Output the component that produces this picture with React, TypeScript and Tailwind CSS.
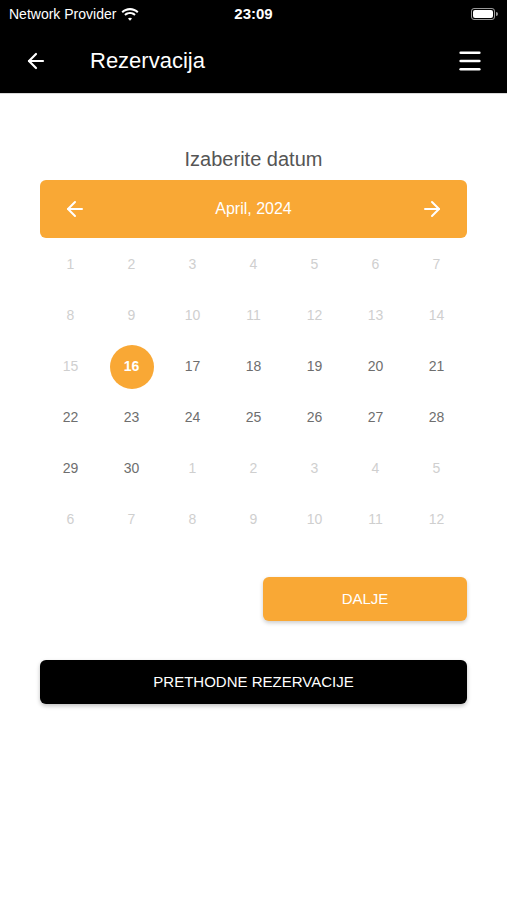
import { ArrowLeft, ArrowRight, Menu } from 'lucide-react';

const font = { fontFamily: '"Liberation Sans", Arial, sans-serif' };

type Day = { n: number; active: boolean };

function buildDays(): Day[] {
  const days: Day[] = [];
  for (let i = 1; i <= 30; i++) days.push({ n: i, active: i >= 16 });
  for (let i = 1; i <= 12; i++) days.push({ n: i, active: false });
  return days;
}

function StatusBar() {
  return (
    <div className="relative flex h-[28px] items-center justify-between px-[9px] text-[14px] text-white">
      <div className="flex items-center gap-[5px]">
        <span>Network Provider</span>
        <svg width="18" height="13" viewBox="0 0 18 13" fill="white">
          <path d="M9 2.2c2.7 0 5.2 1 7.1 2.8l1.4-1.5C15.2 1.3 12.2 0 9 0S2.8 1.3.5 3.5l1.4 1.5C3.8 3.2 6.3 2.2 9 2.2z" />
          <path d="M9 6.1c1.6 0 3.1.6 4.3 1.7l1.4-1.5C13.2 4.9 11.2 4 9 4S4.8 4.9 3.3 6.3l1.4 1.5C5.9 6.7 7.4 6.1 9 6.1z" />
          <path d="M9 9.8c.8 0 1.5.3 2 .8L9 12.8l-2-2.2c.5-.5 1.2-.8 2-.8z" />
        </svg>
      </div>
      <span className="absolute left-1/2 -translate-x-1/2 font-semibold text-[15px]">23:09</span>
      <div className="flex items-center">
        <div className="h-[12px] w-[24px] rounded-[3px] border border-white/60 p-[1px]">
          <div className="h-full w-full rounded-[2px] bg-white" />
        </div>
        <div className="ml-[1px] h-[4px] w-[2px] rounded-r bg-white/60" />
      </div>
    </div>
  );
}

export default function App() {
  const days = buildDays();
  return (
    <div className="min-h-[900px] w-[507px] bg-white" style={font}>
      <div className="bg-black">
        <StatusBar />
        <div className="flex h-[65px] items-center px-[24px] text-white">
          <ArrowLeft size={24} strokeWidth={2.2} />
          <span className="ml-[42px] text-[22px]">Rezervacija</span>
          <Menu size={28} strokeWidth={2.2} className="ml-auto -mr-[1px]" />
        </div>
      </div>
      <div className="h-[1px] bg-[#d8d8d8]" />

      <div className="px-[40px]">
        <h2 className="mt-[50px] text-center text-[20px] text-[#555]">Izaberite datum</h2>
        <div className="mt-[6px] flex h-[58px] items-center justify-between rounded-[6px] bg-[#f9a835] px-[23px] text-white">
          <ArrowLeft size={24} strokeWidth={2} />
          <span className="text-[16px]">April, 2024</span>
          <ArrowRight size={24} strokeWidth={2} />
        </div>

        <div className="mt-[1px] grid grid-cols-7">
          {days.map((d, i) => (
            <div key={i} className="flex h-[51px] items-center justify-center">
              {i === 15 ? (
                <div className="flex h-[44px] w-[44px] items-center justify-center rounded-full bg-[#f9a835] text-[14px] font-bold text-white">
                  {d.n}
                </div>
              ) : (
                <span className={d.active ? 'text-[14px] text-[#6e6e6e]' : 'text-[14px] text-[#cfcfcf]'}>
                  {d.n}
                </span>
              )}
            </div>
          ))}
        </div>

        <div className="mt-[32px] flex justify-end">
          <button className="h-[44px] w-[204px] rounded-[6px] bg-[#f9a835] text-[15px] text-white shadow-[0_2px_4px_rgba(0,0,0,0.2)]">
            DALJE
          </button>
        </div>

        <button className="mt-[39px] h-[44px] w-full rounded-[6px] bg-black text-[15px] text-white shadow-[0_2px_4px_rgba(0,0,0,0.25)]">
          PRETHODNE REZERVACIJE
        </button>
      </div>
    </div>
  );
}
